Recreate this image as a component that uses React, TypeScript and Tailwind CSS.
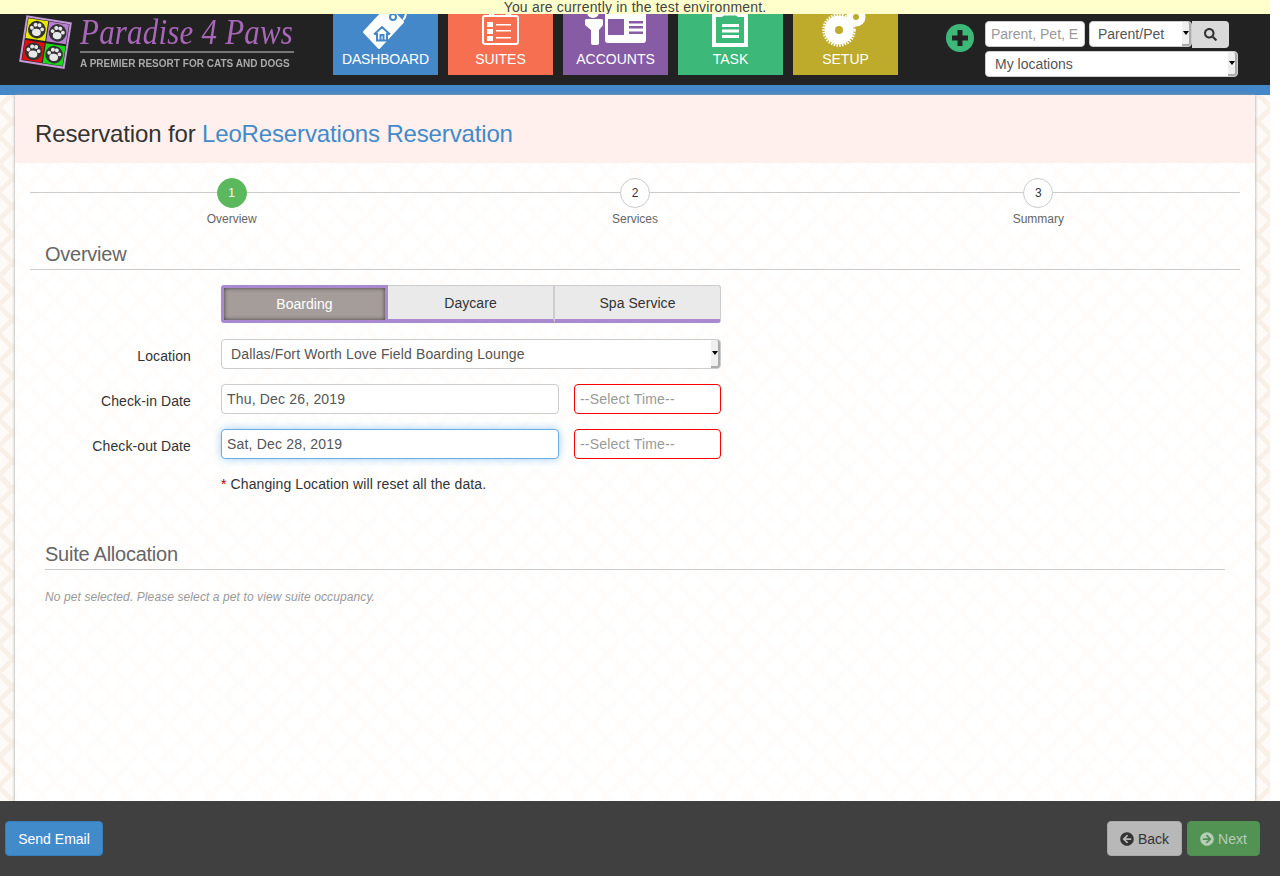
import React from 'react';
import { FaArrowCircleLeft, FaArrowCircleRight, FaSearch } from 'react-icons/fa';

const font = "font-['Liberation_Sans',Arial,sans-serif]";

function Paw({ x, y, bg }: { x: number; y: number; bg: string }) {
  return (
    <g transform={`translate(${x} ${y})`}>
      <rect x="-10" y="-10" width="20" height="20" fill={bg} />
      <circle r="8.8" fill="#333" />
      <ellipse cx="0" cy="2.8" rx="4.4" ry="3.6" fill="#e8e8e8" />
      <circle cx="-5.2" cy="-1" r="1.9" fill="#e8e8e8" />
      <circle cx="-2" cy="-4.6" r="2" fill="#e8e8e8" />
      <circle cx="2" cy="-4.6" r="2" fill="#e8e8e8" />
      <circle cx="5.2" cy="-1" r="1.9" fill="#e8e8e8" />
    </g>
  );
}

function Logo() {
  return (
    <div className="flex w-[333px] items-start pl-[15px]">
      <svg width="60" height="60" viewBox="0 0 60 60" className="shrink-0">
        <g transform="rotate(9 30 28)">
          <rect x="8.5" y="5.5" width="44" height="45" fill="#222" stroke="#c497d6" strokeWidth="2" />
          <Paw x={20} y={17} bg="#e8e800" />
          <Paw x={41} y={17} bg="#b67fd0" />
          <Paw x={20} y={39} bg="#e01010" />
          <Paw x={41} y={39} bg="#18d818" />
        </g>
      </svg>
      <div className="ml-[5px] w-[214px]">
        <div className="h-[37px] origin-top scale-y-[1.15] whitespace-nowrap font-['Liberation_Serif',serif] text-[31px] leading-[32px] tracking-[0.2px] text-[#a866b8] italic">
          Paradise 4 Paws
        </div>
        <div className="h-[2px] bg-[#777]" />
        <div className="mt-[5px] text-[10px] leading-[12px] font-bold tracking-[0.02px] whitespace-nowrap text-[#aaa] blur-[0.3px]">
          A PREMIER RESORT FOR CATS AND DOGS
        </div>
      </div>
    </div>
  );
}

function DashboardIcon() {
  return (
    <svg width="105" height="36" viewBox="0 0 105 36">
      <polygon points="31,18 46,34 70,8 55,-8" fill="#fff" strokeLinejoin="round" stroke="#fff" strokeWidth="2" />
      <path d="M41 20.500l8-7.500 8 7.500M44 19v7.500h10v-7.500M47.500 26v-5h3v5" fill="none" stroke="#4488c9" strokeWidth="2" />
      <circle cx="60" cy="3" r="3" fill="none" stroke="#4488c9" strokeWidth="2" />
      <path d="M73 -2q0 5-3 8" fill="none" stroke="#fff" strokeWidth="2" />
    </svg>
  );
}

function SuitesIcon() {
  return (
    <svg width="105" height="36" viewBox="0 0 105 36">
      <rect x="35" y="2" width="35" height="28" rx="2" fill="none" stroke="#fff" strokeWidth="2" />
      <path d="M39 8h6v5h-6zM39 15h6v5h-6zM39 22h6v5h-6zM48 10h15v1.500h-15zM48 16h15v1.500h-15zM48 23h15v1.500h-15z" fill="#fff" />
      <path d="M41 -1q0 2 2.500 2t2.500-2M58 -1q0 2 2.500 2t2.500-2" fill="none" stroke="#fff" strokeWidth="1.500" />
    </svg>
  );
}

function AccountsIcon() {
  return (
    <svg width="105" height="36" viewBox="0 0 105 36">
      <circle cx="30" cy="-2" r="6" fill="#fff" />
      <path d="M22 6q0-1 2-1h13q3 0 3 1v5l-4 5v13q0 2-2 2h-4q-2 0-2-2v-13l-6-5z" fill="#fff" />
      <path fillRule="evenodd" fill="#fff" d="M42 -4h41v30q0 3-3 3h-35q-3 0-3-3zM45 5v16h16v-16zM66 7v2.500h14v-2.500zM66 12v2.500h14v-2.500zM66 17.500v2.500h14v-2.500z" />
    </svg>
  );
}

function TaskIcon() {
  return (
    <svg width="105" height="36" viewBox="0 0 105 36">
      <path fillRule="evenodd" fill="#fff" d="M34 -2h36v35h-36zM38 3v26h28v-26h-6l-2 -1.500h-12l-2 1.500z" />
      <path d="M44 10h17v3h-17zM44 15.500h17v3h-17zM44 21h17v3h-17z" fill="#fff" />
    </svg>
  );
}

function SetupIcon() {
  return (
    <svg width="105" height="36" viewBox="0 0 105 36">
      <path d="M50 6l10-8 8 8-10 8z" fill="#fff" />
      <circle cx="46" cy="16" r="14.500" fill="#fff" />
      <circle cx="46" cy="16" r="15.500" fill="none" stroke="#fff" strokeWidth="2.500" strokeDasharray="1.600 1.200" />
      <circle cx="46" cy="16" r="4" fill="#bfab2b" />
      <circle cx="63" cy="3" r="9.500" fill="#fff" />
      <circle cx="63" cy="3" r="3" fill="#bfab2b" />
    </svg>
  );
}

function NavTile({ label, className, children }: { label: string; className: string; children: React.ReactNode }) {
  return (
    <a href="#" className={`flex h-[61px] w-[105px] flex-col overflow-hidden text-center text-[14px] leading-[20px] text-white ${className}`}>
      <div className="h-[35px] overflow-hidden">{children}</div>
      <span>{label}</span>
    </a>
  );
}

function SelectArrow() {
  return (
    <span className="pointer-events-none absolute top-px right-px bottom-px flex w-[9px] items-center justify-center rounded-r-[3px] border-r-2 border-b-2 border-[#aaa] bg-[#efefef]">
      <span className="h-0 w-0 border-x-[3px] border-t-[4px] border-x-transparent border-t-black" />
    </span>
  );
}

function Header() {
  return (
    <header className="w-[1270px]">
      <div className="h-[14px] overflow-hidden bg-[#ffffcc] text-center text-[14px] leading-[14px] tracking-[0.19px] text-[#444]">
        You are currently in the test environment.
      </div>
      <div className="flex h-[71px] bg-[#222]">
        <Logo />
        <nav className="flex h-[61px] gap-[10px]">
          <NavTile label="DASHBOARD" className="bg-[#4488c9] tracking-[-0.2px]"><DashboardIcon /></NavTile>
          <NavTile label="SUITES" className="bg-[#f66f50]"><SuitesIcon /></NavTile>
          <NavTile label="ACCOUNTS" className="bg-[#875ca5]"><AccountsIcon /></NavTile>
          <NavTile label="TASK" className="bg-[#3cb878]"><TaskIcon /></NavTile>
          <NavTile label="SETUP" className="bg-[#bfab2b]"><SetupIcon /></NavTile>
        </nav>
        <div className="mt-[10px] ml-[48px] flex h-[28px] w-[28px] items-center justify-center rounded-full bg-[#3cb878]">
          <svg width="16" height="16" viewBox="0 0 16 16">
            <path d="M5.500 0h5v5.500h5.500v5h-5.500v5.500h-5v-5.500h-5.500v-5h5.500z" fill="#222" />
          </svg>
        </div>
        <div className="mt-[7px] ml-[11px] w-[253px]">
          <div className="flex h-[27px] items-start">
            <input
              placeholder="Parent, Pet, Email"
              className="h-[26px] w-[100px] rounded-[4px] border border-[#ccc] bg-white px-[5px] text-[14px] text-[#555] outline-none placeholder:text-[#999]"
            />
            <div className="relative ml-[4px] h-[26px] w-[103px]">
              <select defaultValue="Parent/Pet" className="h-full w-full appearance-none rounded-[4px] border border-[#ccc] bg-white px-[8px] text-[14px] text-[#555] outline-none">
                <option>Parent/Pet</option>
              </select>
              <SelectArrow />
            </div>
            <button className="flex h-[27px] w-[37px] items-center justify-center rounded-r-[4px] bg-[#d9d9d9] text-[13px] text-[#333]">
              <FaSearch />
            </button>
          </div>
          <div className="relative mt-[3px] h-[26px] w-[253px]">
            <select defaultValue="My locations" className="h-full w-full appearance-none rounded-[4px] border border-[#ccc] bg-white px-[9px] text-[14px] text-[#555] outline-none">
              <option>My locations</option>
            </select>
            <SelectArrow />
          </div>
        </div>
      </div>
      <div className="h-[10px] bg-[#4488c9]" />
    </header>
  );
}

function Step({ n, label, active }: { n: number; label: string; active?: boolean }) {
  return (
    <div className="relative flex flex-col items-center">
      <div className={`flex h-[30px] w-[30px] items-center justify-center rounded-full border text-[12px] ${active ? 'border-[#5cb85c] bg-[#5cb85c] text-white' : 'border-[#ccc] bg-white text-[#333]'}`}>
        {n}
      </div>
      <div className="mt-[3px] text-[12px] leading-[17px] text-[#666]">{label}</div>
    </div>
  );
}

function FormRow({ label, children, className }: { label: string; children: React.ReactNode; className?: string }) {
  return (
    <div className={`flex ${className ?? ''}`}>
      <label className="w-[161px] pt-[4px] text-right text-[14px] leading-[26px] tracking-[0.1px] text-[#333]">{label}</label>
      <div className="ml-[30px] flex w-[500px] gap-[15px]">{children}</div>
    </div>
  );
}

function TimeInput() {
  return (
    <input
      placeholder="--Select Time--"
      className="h-[30px] w-[147px] rounded-[4px] border border-[#f00] bg-white px-[5px] text-[14px] tracking-[0.2px] text-[#555] outline-none placeholder:text-[#999]"
    />
  );
}

function Tabs() {
  return (
    <div className="ml-[191px] flex h-[38px] w-[500px] text-[14px] tracking-[0.05px]">
      <button className="h-full w-[167px] rounded-l-[3px] border-[3px] border-[#a98ad0] bg-[#a59d9a] pt-px text-white shadow-[inset_0_0_4px_#3a3a3a]">
        Boarding
      </button>
      <button className="h-full w-[167px] border-t border-r-2 border-b-4 border-[#ccc] border-b-[#a98ad0] bg-[#eaeaea] pt-px text-[#333]">
        Daycare
      </button>
      <button className="h-full w-[166px] rounded-r-[3px] border-t border-r border-b-4 border-[#ccc] border-b-[#a98ad0] bg-[#eaeaea] pt-px text-[#333]">
        Spa Service
      </button>
    </div>
  );
}

function Main() {
  return (
    <main className="ml-[15px] h-[706px] w-[1240px] bg-white bg-[repeating-linear-gradient(45deg,#fefdfc_0_5px,transparent_5px_20px),repeating-linear-gradient(-45deg,#fefdfc_0_5px,transparent_5px_20px)] shadow-[0_0_3px_#999]">
      <div className="flex h-[68px] items-center bg-[#fff0ed] pt-[10px] pl-[20px] text-[24px] tracking-[-0.15px] text-[#333]">
        Reservation for&nbsp;<a href="#" className="text-[#428bca]">LeoReservations Reservation</a>
      </div>

      <div className="relative mx-[15px] grid grid-cols-3 pt-[15px]">
        <div className="absolute top-[29px] right-0 left-0 h-px bg-[#ccc]" />
        <Step n={1} label="Overview" active />
        <Step n={2} label="Services" />
        <Step n={3} label="Summary" />
      </div>

      <h2 className="mx-[15px] mt-[14px] h-[28px] border-b border-[#ccc] pl-[15px] text-[20px] leading-[24px] tracking-[-0.25px] text-[#666]">Overview</h2>

      <div className="mx-[15px] mt-[15px]">
        <Tabs />
        <FormRow label="Location" className="mt-[16px]">
          <div className="relative h-[30px] w-[500px]">
            <select defaultValue="Dallas" className="h-full w-full appearance-none rounded-[4px] border border-[#ccc] bg-white px-[9px] text-[14px] tracking-[0.136px] text-[#555] outline-none">
              <option value="Dallas">Dallas/Fort Worth Love Field Boarding Lounge</option>
            </select>
            <SelectArrow />
          </div>
        </FormRow>
        <FormRow label="Check-in Date" className="mt-[15px]">
          <input readOnly value="Thu, Dec 26, 2019" className="h-[30px] w-[338px] rounded-[4px] border border-[#ccc] bg-white px-[5px] text-[14px] tracking-[0.18px] text-[#555] outline-none" />
          <TimeInput />
        </FormRow>
        <FormRow label="Check-out Date" className="mt-[15px]">
          <input readOnly value="Sat, Dec 28, 2019" className="h-[30px] w-[338px] rounded-[4px] border border-[#66afe9] bg-white px-[5px] text-[14px] tracking-[0.18px] text-[#555] shadow-[0_0_8px_rgba(102,175,233,0.6)] outline-none" />
          <TimeInput />
        </FormRow>
        <p className="mt-[16px] ml-[191px] text-[14px] leading-[18px] tracking-[0.1px] text-[#333]">
          <span className="text-[#a00]">*</span> Changing Location will reset all the data.
        </p>
      </div>

      <h2 className="mx-[30px] mt-[50px] h-[27px] border-b border-[#ccc] text-[20px] leading-[23px] tracking-[-0.25px] text-[#666]">Suite Allocation</h2>
      <p className="mx-[30px] mt-[18px] text-[12px] leading-[18px] tracking-[0.1px] text-[#999] italic">
        No pet selected. Please select a pet to view suite occupancy.
      </p>
    </main>
  );
}

function Footer() {
  return (
    <footer className="absolute right-0 bottom-0 left-0 flex h-[75px] items-center justify-between bg-[#404040] pr-[20px] pl-[5px] text-[14px]">
      <button className="h-[35px] w-[98px] rounded-[4px] border border-[#357ebd] bg-[#428bca] pt-px text-white">Send Email</button>
      <div className="flex gap-[5px]">
        <button className="flex h-[35px] w-[75px] items-center justify-center gap-[4px] rounded-[4px] border border-[#a8a8a8] bg-[#b8b8b8] pt-px text-[#333]">
          <FaArrowCircleLeft /> Back
        </button>
        <button className="flex h-[35px] w-[73px] items-center justify-center gap-[4px] rounded-[4px] border border-[#4f8f50] bg-[#529253] pt-px text-[#b5cdb6]">
          <FaArrowCircleRight /> Next
        </button>
      </div>
    </footer>
  );
}

export default function App() {
  return (
    <div className={`relative h-[876px] w-[1280px] overflow-hidden bg-white ${font}`}>
      <Header />
      <div className="h-[781px] w-[1270px] bg-[#fdfaf7] bg-[repeating-linear-gradient(45deg,#f9f0e8_0_5px,transparent_5px_20px),repeating-linear-gradient(-45deg,#f9f0e8_0_5px,transparent_5px_20px)]">
        <Main />
      </div>
      <Footer />
    </div>
  );
}
